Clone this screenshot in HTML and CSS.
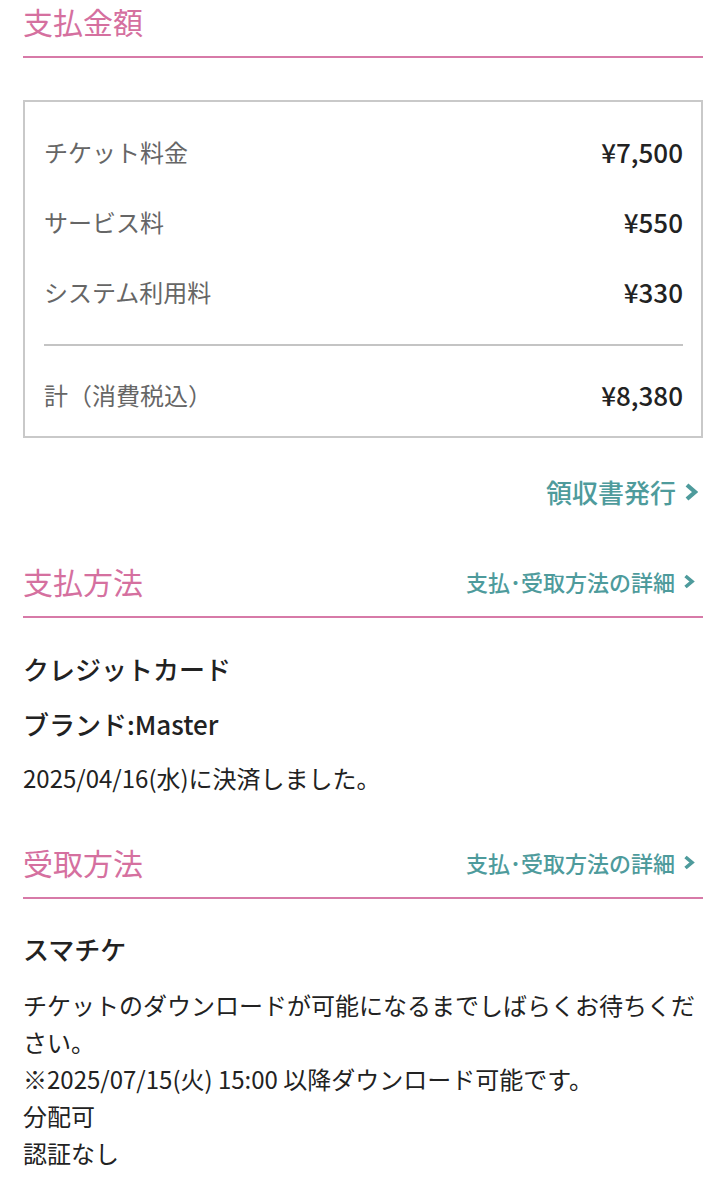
FILE: index.html
```html
<!DOCTYPE html>
<html lang="ja">
<head>
<meta charset="utf-8">
<link rel="stylesheet" href="styles.css">
</head>
<body>
<main class="page">
  <section class="section">
    <div class="sec-head">
      <h2 class="sec-title">支払金額</h2>
    </div>
    <div class="price-box">
      <div class="price-row"><span class="label">チケット料金</span><span class="value">¥7,500</span></div>
      <div class="price-row"><span class="label">サービス料</span><span class="value">¥550</span></div>
      <div class="price-row"><span class="label">システム利用料</span><span class="value">¥330</span></div>
      <div class="divider"></div>
      <div class="price-row total"><span class="label">計（消費税込）</span><span class="value">¥8,380</span></div>
    </div>
    <div class="receipt">
      <a class="link big" href="#">領収書発行<svg class="chev" viewBox="0 0 14 18" width="14" height="18"><path d="M3 2 L11 9 L3 16" fill="none" stroke="currentColor" stroke-width="4.2" stroke-linecap="butt" stroke-linejoin="miter"/></svg></a>
    </div>
  </section>

  <section class="section sec2">
    <div class="sec-head">
      <h2 class="sec-title">支払方法</h2>
      <a class="link small" href="#">支払･受取方法の詳細<svg class="chev" viewBox="0 0 12 15" width="12" height="15"><path d="M2.5 2 L9 7.5 L2.5 13" fill="none" stroke="currentColor" stroke-width="3.6" stroke-linecap="butt" stroke-linejoin="miter"/></svg></a>
    </div>
    <p class="strong first">クレジットカード</p>
    <p class="strong">ブランド:Master</p>
    <p class="text">2025/04/16(水)に決済しました。</p>
  </section>

  <section class="section sec3">
    <div class="sec-head">
      <h2 class="sec-title">受取方法</h2>
      <a class="link small" href="#">支払･受取方法の詳細<svg class="chev" viewBox="0 0 12 15" width="12" height="15"><path d="M2.5 2 L9 7.5 L2.5 13" fill="none" stroke="currentColor" stroke-width="3.6" stroke-linecap="butt" stroke-linejoin="miter"/></svg></a>
    </div>
    <p class="strong first">スマチケ</p>
    <p class="para">チケットのダウンロードが可能になるまでしばらくお待ちください。<br>※2025/07/15(火) 15:00 以降ダウンロード可能です。<br>分配可<br>認証なし</p>
  </section>
</main>
</body>
</html>
```

FILE: styles.css
```css
* { box-sizing: border-box; }
html, body { margin: 0; padding: 0; background: #fff; }
body {
  font-family: "Noto Sans CJK JP", "Noto Sans", sans-serif;
  color: #222;
  width: 726px;
}
.page { padding: 0 23px; }
.section { display: flex; flex-direction: column; }
.sec2 { margin-top: 50px; }
.sec3 { margin-top: 45px; }
.sec-head {
  display: flex;
  justify-content: space-between;
  align-items: center;
  border-bottom: 2px solid #d77aa8;
  padding-bottom: 14px;
}
.sec-title {
  margin: 0;
  font-size: 30px;
  line-height: 42px;
  font-weight: 400;
  color: #d5709f;
}
.price-box {
  margin-top: 42px;
  border: 2px solid #c9c9c9;
  padding: 14px 18px 7px 19px;
}
.price-row {
  display: flex;
  justify-content: space-between;
  align-items: center;
  height: 70px;
}
.label { font-size: 24px; color: #666; }
.value { font-size: 26px; font-weight: 500; color: #222; }
.divider { height: 2px; background: #c4c4c4; margin-top: 18px; }
.total { margin-top: 13px; }
.receipt { display: flex; justify-content: flex-end; margin-top: 36px; padding-right: 5px; }
.link {
  display: inline-flex;
  align-items: center;
  color: #4e9b9c;
  text-decoration: none;
  font-weight: 500;
}
.link.big { font-size: 26px; line-height: 36px; }
.link.big .chev { margin-left: 8px; }
.link.small { font-size: 22px; line-height: 30px; margin-right: 8px; }
.link.small .chev { margin-left: 8px; }
p { margin: 0; }
.strong { font-size: 26px; line-height: 36px; font-weight: 500; margin-top: 19px; }
.strong.first { margin-top: 33px; }
.sec3 .strong.first { margin-top: 32px; }
.text { font-size: 24px; line-height: 36px; margin-top: 18px; }
.para { font-size: 24px; line-height: 37px; margin-top: 19px; }
```
